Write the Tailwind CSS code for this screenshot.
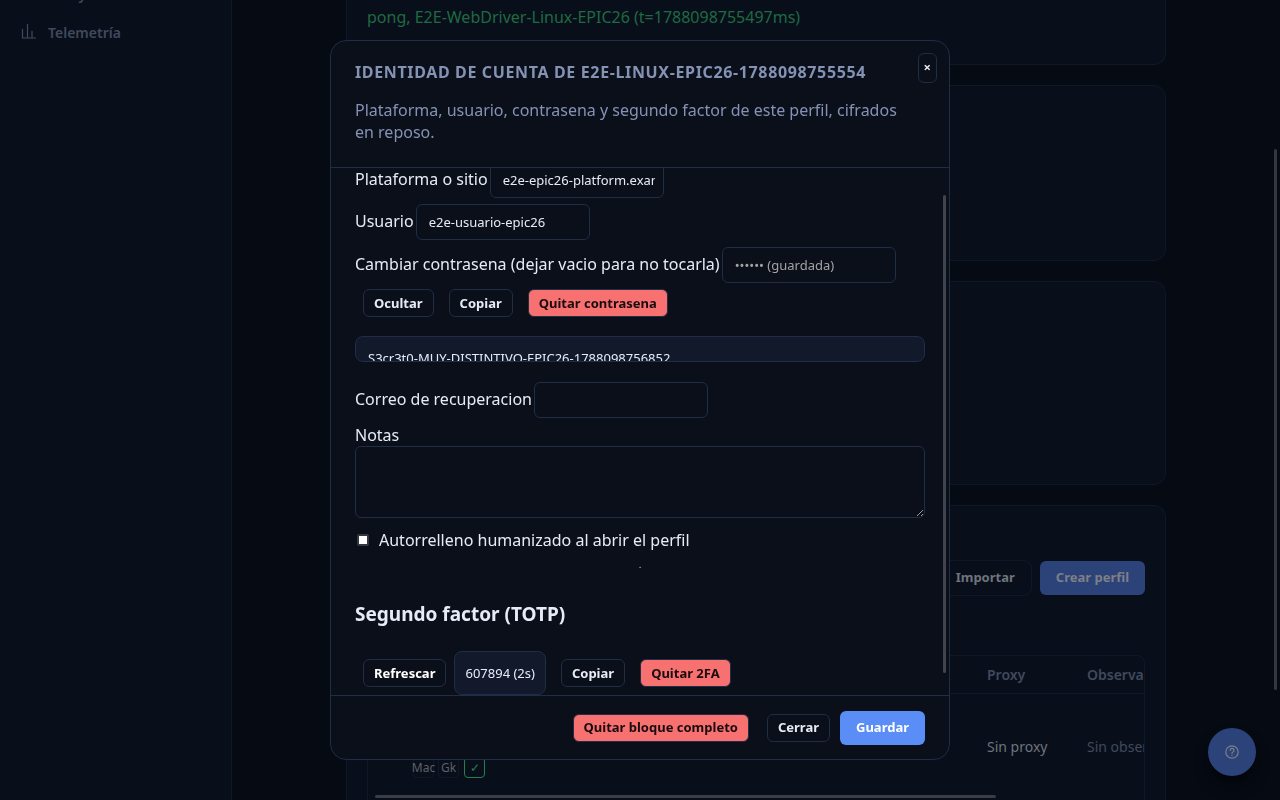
<!DOCTYPE html>
<html lang="es">
<head>
    <meta charset="UTF-8">
    <meta name="viewport" content="width=device-width, initial-scale=1.0">
    <title>Identidad de cuenta</title>
    <script src="https://cdn.jsdelivr.net/npm/@tailwindcss/browser@4"></script>
</head>
<body class="bg-[#050a13] font-['Noto_Sans',sans-serif] text-[#e6ebf7]">
    <div class="flex h-screen overflow-hidden">
        <!-- Sidebar -->
        <nav class="w-58 shrink-0 border-r border-[#121827] bg-[#080f1b] text-[14px] font-semibold text-[#41495c]">
            <a href="#" class="-mt-4 flex h-8 items-center pb-3 pl-12">Proxy</a>
            <a href="#" class="flex h-8 items-center gap-3 pl-5">
                <svg class="size-4" viewBox="0 0 16 16" fill="none" stroke="currentColor" stroke-width="1.2">
                    <path d="M2.5 5v9M2 14h14M7.5 0v14M12 7v7"/>
                </svg>
                <span>Telemetría</span>
            </a>
        </nav>

        <!-- Main content -->
        <main class="min-w-0 flex-1">
            <div class="mx-auto flex max-w-[820px] flex-col gap-5">
                <section class="h-[65px] rounded-b-xl border border-t-0 border-[#101828] bg-[#080f1b] px-5 pt-1.5">
                    <p class="leading-[22px] text-[#1f6a40]">pong, E2E-WebDriver-Linux-EPIC26 (t=1788098755497ms)</p>
                </section>
                <section class="h-44 rounded-xl border border-[#101828] bg-[#080f1b]"></section>
                <section class="h-51 rounded-xl border border-[#101828] bg-[#080f1b]"></section>
                <section class="rounded-t-xl border border-b-0 border-[#101828] bg-[#080f1b] px-5 pt-[54px]">
                    <div class="flex items-center justify-end gap-2 text-[13px] font-bold">
                        <button type="button" class="h-9 rounded-lg border border-[#101828] px-4 text-[#6f737b]">Importar</button>
                        <button type="button" class="h-[34px] rounded-md bg-[#2c437a] px-4 text-[#7d7f86]">Crear perfil</button>
                    </div>
                    <div class="relative mt-[59px] h-40 overflow-hidden rounded-lg border border-[#101828]">
                        <table class="w-[1100px] table-fixed text-left text-[14px]">
                            <colgroup>
                                <col class="w-[603px]">
                                <col class="w-[100px]">
                                <col>
                            </colgroup>
                            <thead>
                                <tr class="h-[37px] border-b border-[#101828] text-[#41495c]">
                                    <th><span class="sr-only">Perfil</span></th>
                                    <th class="px-4 font-semibold">Proxy</th>
                                    <th class="px-4 font-semibold">Observaciones</th>
                                </tr>
                            </thead>
                            <tbody>
                                <tr class="h-[106px]">
                                    <td class="pb-[21px] pl-[45px] align-bottom">
                                        <div class="flex gap-1 text-xs text-[#5c6069]">
                                            <span class="flex size-[21px] items-center justify-center rounded-sm border border-[#101828]">Mac</span>
                                            <span class="flex size-[21px] items-center justify-center rounded-sm border border-[#101828]">Gk</span>
                                            <span class="ml-px flex size-[21px] items-center justify-center rounded-sm border border-[#22804b] text-[#22804b]">✓</span>
                                        </div>
                                    </td>
                                    <td class="px-4 text-[#6f737b]">Sin proxy</td>
                                    <td class="px-4 text-[#41495c]">Sin observaciones</td>
                                </tr>
                            </tbody>
                        </table>
                        <!-- Horizontal scroll thumb -->
                        <div class="absolute top-[139px] left-[7px] h-[3px] w-4/5 rounded-full bg-[#3a3d44]"></div>
                    </div>
                </section>
            </div>
        </main>
    </div>

    <!-- Page scroll thumb -->
    <div class="fixed top-[149px] right-[3px] h-[541px] w-[3px] rounded-full bg-[#33373f]"></div>

    <!-- Help button -->
    <button type="button" aria-label="Ayuda" class="fixed right-6 bottom-6 flex size-12 items-center justify-center rounded-full bg-[#2c437a] text-[#7d7f86] shadow-lg shadow-black/60">
        <svg class="size-4" viewBox="0 0 16 16" fill="none" stroke="currentColor" stroke-width="1.2" stroke-linecap="round">
            <circle cx="8" cy="8" r="6.2"/>
            <path d="M6.2 6.3a1.9 1.9 0 1 1 2.7 1.7c-.6.3-.9.6-.9 1.2M8 11.2v.1"/>
        </svg>
    </button>

    <!-- Account identity dialog -->
    <div class="fixed inset-0 flex items-center justify-center">
        <div role="dialog" aria-labelledby="dialog-title" class="relative flex h-[90vh] w-full max-w-[620px] flex-col overflow-hidden rounded-2xl border border-[#1f2d47] bg-[#0b0f1a]">
            <header class="border-b border-[#1f2d47] px-6 pt-5 pb-6 leading-[22px] text-[#8492b4]">
                <h2 id="dialog-title" class="font-bold tracking-[0.04em] uppercase">Identidad de cuenta de e2e-linux-epic26-1788098755554</h2>
                <p class="mt-4 pr-2">Plataforma, usuario, contrasena y segundo factor de este perfil, cifrados en reposo.</p>
            </header>
            <button type="button" aria-label="Cerrar" class="absolute top-3 right-3 h-[30px] rounded-md border border-[#1f2d47] px-[5px] text-[13px] font-bold">×</button>

            <div class="relative min-h-0 flex-1 overflow-hidden px-6 leading-[22px]">
                <form id="identity-form" class="-mt-1.5 flex flex-col">
                    <div class="mb-1.5 flex items-center gap-0.5">
                        <label for="platform" class="pb-0.5">Plataforma o sitio</label>
                        <input id="platform" type="text" value="e2e-epic26-platform.example.com" class="h-9 w-[174px] rounded-md border border-[#1f2d47] pr-2 pl-3 text-[13px]">
                    </div>
                    <div class="mb-[7px] flex items-center gap-0.5">
                        <label for="user" class="pb-0.5">Usuario</label>
                        <input id="user" type="text" value="e2e-usuario-epic26" class="h-9 w-[174px] rounded-md border border-[#1f2d47] px-3 text-[13px]">
                    </div>
                    <div class="mb-1.5 flex items-center gap-0.5">
                        <label for="password" class="pb-0.5">Cambiar contrasena (dejar vacio para no tocarla)</label>
                        <input id="password" type="password" placeholder="•••••• (guardada)" class="h-9 w-[174px] rounded-md border border-[#1f2d47] px-3 text-[13px] placeholder:text-[#a3a3a3]">
                    </div>
                    <div class="flex gap-[15px] px-2 text-[13px] font-bold">
                        <button type="button" class="h-7 rounded-md border border-[#1f2d47] px-2.5">Ocultar</button>
                        <button type="button" class="h-7 rounded-md border border-[#1f2d47] px-2.5">Copiar</button>
                        <button type="button" class="h-7 rounded-md border border-[#1f2d47] bg-[#f87171] px-2.5 text-[#1a0b0f]">Quitar contrasena</button>
                    </div>
                    <pre class="mt-[19px] h-[26px] shrink-0 overflow-hidden rounded-lg border border-[#1f2d47] bg-[#12192a] px-3 pt-2.5 font-['Noto_Sans',sans-serif] text-[13px]">S3cr3t0-MUY-DISTINTIVO-EPIC26-1788098756852</pre>
                    <div class="mt-5 mb-1.5 flex items-center gap-0.5">
                        <label for="email" class="pb-0.5">Correo de recuperacion</label>
                        <input id="email" type="email" class="h-9 w-[174px] rounded-md border border-[#1f2d47] px-3 text-[13px]">
                    </div>
                    <label for="notes">Notas</label>
                    <textarea id="notes" class="h-[72px] w-full rounded-md border border-[#1f2d47] px-3 py-2 text-[13px]"></textarea>
                    <div class="mt-[11px] flex items-center gap-2.5 pl-0.5">
                        <input id="autofill" type="checkbox" class="size-3 appearance-none rounded-xs border-2 border-[#343841] bg-white">
                        <label for="autofill">Autorrelleno humanizado al abrir el perfil</label>
                    </div>
                    <p class="text-center text-[8px] leading-[28px]">.</p>
                    <h3 class="mt-[22px] text-[19px] leading-[26px] font-bold">Segundo factor (TOTP)</h3>
                    <div class="mt-6 flex items-center px-2 text-[13px] font-bold">
                        <button type="button" class="h-7 rounded-md border border-[#1f2d47] px-2.5 text-white">Refrescar</button>
                        <output class="ml-2 rounded-lg border border-[#1f2d47] bg-[#12192a] p-2.5 font-normal">607894 (2s)</output>
                        <button type="button" class="ml-[15px] h-7 rounded-md border border-[#1f2d47] px-2.5">Copiar</button>
                        <button type="button" class="ml-[15px] h-7 rounded-md border border-[#1f2d47] bg-[#f87171] px-2.5 text-[#1a0b0f]">Quitar 2FA</button>
                    </div>
                </form>
                <!-- Dialog scroll thumb -->
                <div class="absolute top-[27px] right-[3px] h-[478px] w-[3px] rounded-full bg-[#41444c]"></div>
            </div>

            <footer class="flex items-center justify-end border-t border-[#1f2d47] px-6 pt-[15px] pb-3.5 text-[13px] font-bold">
                <button type="button" class="h-7 rounded-md border border-[#1f2d47] bg-[#f87171] px-2.5 text-[#1a0b0f]">Quitar bloque completo</button>
                <button type="button" class="ml-[18px] h-7 rounded-md border border-[#1f2d47] px-2.5">Cerrar</button>
                <button type="submit" form="identity-form" class="ml-2.5 h-[34px] rounded-md bg-[#5b8df6] px-4 text-white">Guardar</button>
            </footer>
        </div>
    </div>
</body>
</html>
